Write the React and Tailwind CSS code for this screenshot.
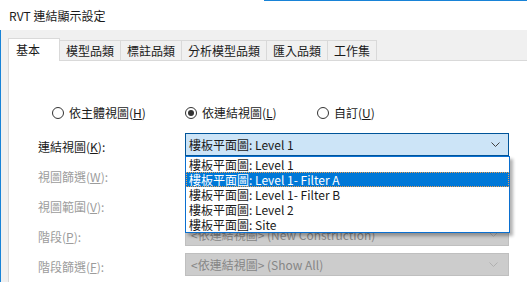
const font = { fontFamily: '"Noto Sans CJK TC", "Noto Sans", sans-serif' };

const tabs = ["基本", "模型品類", "標註品類", "分析模型品類", "匯入品類", "工作集"];

const viewOptions = [
  "樓板平面圖: Level 1",
  "樓板平面圖: Level 1- Filter A",
  "樓板平面圖: Level 1- Filter B",
  "樓板平面圖: Level 2",
  "樓板平面圖: Site",
];

const Chevron = ({ color }) => (
  <svg className="h-[5px] w-[9px]" viewBox="0 0 9 5" fill="none">
    <path d="M0.5 0.5l4 4 4-4" stroke={color} strokeWidth="1" />
  </svg>
);

const Radio = ({ checked, label, mnemonic }) => (
  <div className="flex items-center gap-[5px]">
    <span className="flex h-[12px] w-[12px] items-center justify-center rounded-full border border-[#333333] bg-white">
      {checked && <span className="h-[6px] w-[6px] rounded-full bg-[#333333]" />}
    </span>
    <span>
      {label}(<u>{mnemonic}</u>)
    </span>
  </div>
);

const Label = ({ text, mnemonic, disabled }) => (
  <div className={`h-[22px] pt-[6px] leading-[16px] ${disabled ? "text-[#9c9c9c]" : "text-[#1a1a1a]"}`}>
    {text}(<u>{mnemonic}</u>):
  </div>
);

// combos under the open list show no readable text
const DisabledCombo = ({ text }) => (
  <div className="flex h-[23px] w-[324px] items-center justify-between border border-[#bfbfbf] bg-[#cccccc] pl-[5px] pr-[10px] text-[#868686]">
    <span>{text}</span>
    <Chevron color="#b0b0b0" />
  </div>
);

export default function App() {
  return (
    <div className="flex h-[282px] w-[527px] flex-col overflow-hidden bg-white text-[12px] text-[#1a1a1a]" style={font}>
      <div className="h-px ml-[264px] bg-[#1883d7]" />
      <div className="flex h-[29px] items-center pl-[9px] pt-px">RVT 連結顯示設定</div>

      <div className="flex flex-1 flex-col border-l border-[#1883d7] bg-[#f0f0f0] pl-[7px] pt-[9px]">
        <div className="flex h-[22px] items-end border-b border-[#d9d9d9]">
          {tabs.map((t, i) =>
            i === 0 ? (
              <div
                key={t}
                className="relative z-10 -mb-px flex h-[23px] w-[52px] items-start border border-b-0 border-[#d9d9d9] bg-white pl-[7px] pt-[2px]"
              >
                {t}
              </div>
            ) : (
              <div
                key={t}
                className="flex h-[20px] items-center border border-b-0 border-l-0 border-[#d9d9d9] bg-[#f0f0f0] px-[6px]"
              >
                {t}
              </div>
            )
          )}
        </div>

        <div className="flex-1 border-l border-[#d9d9d9] bg-white pl-[29px] pt-[44px]">
          <div className="flex h-[16px] items-center">
            <div className="ml-[14px] w-[133px]">
              <Radio label="依主體視圖" mnemonic="H" />
            </div>
            <div className="w-[132px]">
              <Radio checked label="依連結視圖" mnemonic="L" />
            </div>
            <Radio label="自訂" mnemonic="U" />
          </div>

          <div className="mt-[12px] grid grid-cols-[147px_auto] gap-y-[7px]">
            <Label text="連結視圖" mnemonic="K" />
            <div className="relative h-[23px]">
              <div className="flex h-[23px] w-[324px] items-center justify-between border border-[#005499] bg-[#cce4f7] pl-[3px] pr-[8px]">
                <span>樓板平面圖: Level 1</span>
                <Chevron color="#404040" />
              </div>
              <div className="absolute left-0 top-[23px] z-20 w-[325px] border border-[#0a6fd0] bg-white shadow-[3px_3px_3px_rgba(0,0,0,0.3)]">
                {viewOptions.map((o, i) => (
                  <div
                    key={o}
                    className={`flex h-[15px] items-center pl-[3px] leading-[15px] ${
                      i === 1 ? "bg-[#0078d7] text-white outline-1 -outline-offset-1 outline-dotted outline-[#f0a050]" : ""
                    }`}
                  >
                    {o}
                  </div>
                ))}
              </div>
            </div>

            <Label text="視圖篩選" mnemonic="W" disabled />
            <DisabledCombo text="" />

            <Label text="視圖範圍" mnemonic="V" disabled />
            <DisabledCombo text="" />

            <Label text="階段" mnemonic="P" disabled />
            <DisabledCombo text="<依連結視圖> (New Construction)" />

            <Label text="階段篩選" mnemonic="F" disabled />
            <DisabledCombo text="<依連結視圖> (Show All)" />
          </div>
        </div>
      </div>
    </div>
  );
}
